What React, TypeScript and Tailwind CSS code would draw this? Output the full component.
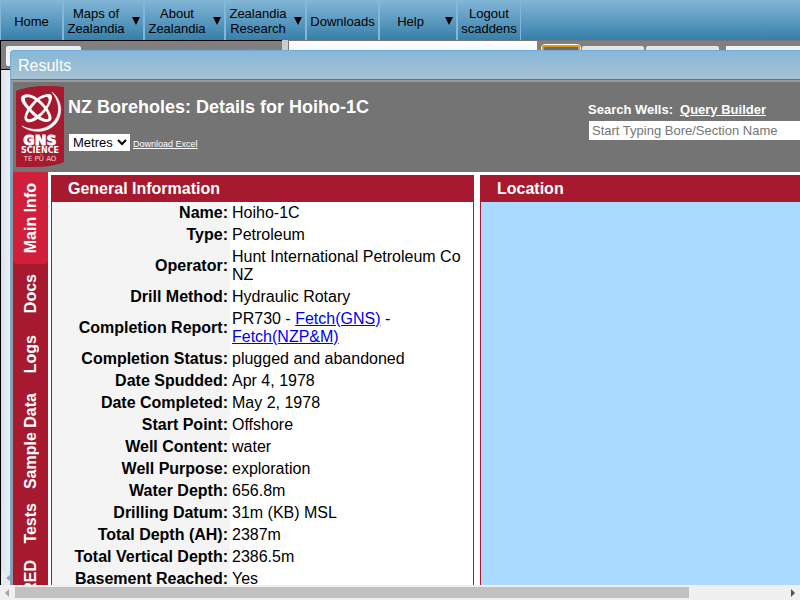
import type { ReactNode } from "react";

const sans = "font-['Liberation_Sans',Arial,sans-serif]";

type NavEntry = { lines: string[]; width: string; menu?: boolean };

const navEntries: NavEntry[] = [
  { lines: ["Home"], width: "w-16 border-r-2 border-l" },
  { lines: ["Maps of", "Zealandia"], width: "w-[81px] border-r-2", menu: true },
  { lines: ["About", "Zealandia"], width: "w-[81px] border-r-2", menu: true },
  { lines: ["Zealandia", "Research"], width: "w-[81px] border-r-2", menu: true },
  { lines: ["Downloads"], width: "w-[73px] border-r-2" },
  { lines: ["Help"], width: "w-[78px] border-r-2", menu: true },
  { lines: ["Logout", "scaddens"], width: "w-[63px] border-r" },
];

const tabs = [
  { label: "Main Info", size: "h-[92px]", active: true },
  { label: "Docs", size: "h-[60px]" },
  { label: "Logs", size: "h-[60px]" },
  { label: "Sample Data", size: "h-[114px]" },
  { label: "Tests", size: "h-[51px]" },
  { label: "FRED", size: "h-[66px]" },
];

const rows: [string, ReactNode][] = [
  ["Name:", "Hoiho-1C"],
  ["Type:", "Petroleum"],
  ["Operator:", "Hunt International Petroleum Co NZ"],
  ["Drill Method:", "Hydraulic Rotary"],
  [
    "Completion Report:",
    <>
      PR730 -{" "}
      <a href="#gns" className="text-[#0000ee] underline">Fetch(GNS)</a> -{" "}
      <a href="#nzpm" className="text-[#0000ee] underline">Fetch(NZP&amp;M)</a>
    </>,
  ],
  ["Completion Status:", "plugged and abandoned"],
  ["Date Spudded:", "Apr 4, 1978"],
  ["Date Completed:", "May 2, 1978"],
  ["Start Point:", "Offshore"],
  ["Well Content:", "water"],
  ["Well Purpose:", "exploration"],
  ["Water Depth:", "656.8m"],
  ["Drilling Datum:", "31m (KB) MSL"],
  ["Total Depth (AH):", "2387m"],
  ["Total Vertical Depth:", "2386.5m"],
  ["Basement Reached:", "Yes"],
];

function NavBar() {
  return (
    <nav className="flex h-10 shrink-0 bg-linear-to-b from-[#82b6d7] to-[#3480aa] text-[13px] leading-[15px] text-black">
      {navEntries.map((entry) => (
        <button
          key={entry.lines.join(" ")}
          type="button"
          className={`flex shrink-0 items-center border-[#84b6d5] pt-[2px] ${entry.width}`}
        >
          <span className="flex-1 text-center">
            {entry.lines.map((line) => (
              <span key={line} className="block">{line}</span>
            ))}
          </span>
          {entry.menu && (
            <svg className="mr-[3px] w-3 shrink-0" viewBox="0 0 12 8" aria-hidden="true">
              <path d="M4 0h8L8 8z" fill="#000" />
            </svg>
          )}
        </button>
      ))}
    </nav>
  );
}

function Backdrop() {
  return (
    <div className="flex h-full border-l border-black">
      <div className="flex w-[281px] shrink-0 flex-col bg-linear-to-r from-[#d8e2ec] to-[#f2f6fa] to-[12px]">
        <div className="h-[30px] border-y border-black bg-[#808080] pt-[5px] pl-[5px]">
          <div className="h-5 w-[75px] rounded-xs bg-linear-to-b from-[#eceff1] to-[#f8f8f8]" />
        </div>
        <div className="flex-1" />
        <div className="flex h-[14px] items-center bg-[#e6eaee] pl-[5px]">
          <svg className="w-[5px]" viewBox="0 0 5 8" aria-hidden="true">
            <path d="M5 0v8L0 4z" fill="#a3a3a3" />
          </svg>
        </div>
      </div>
      <div className="w-[6px] shrink-0 bg-[#cccccc]" />
      <div className="w-[249px] shrink-0 border-t border-l border-[#777777] bg-linear-to-b from-white to-[#eef5fb] to-[12px]" />
      <div className="flex min-w-0 flex-1 items-start gap-[2px] border-t border-[#777777] bg-[#808080] pt-[5px] pl-1">
        <div className="-mt-[2px] h-6 w-10 shrink-0 rounded border border-white bg-[#6b6b6b] p-0">
          <div className="h-full rounded-[3px] border-2 border-[#e09a10]" />
        </div>
        <div className="-ml-[1px] h-6 w-[62px] shrink-0 rounded-xs bg-[#e1e6e9]" />
        <div className="h-6 w-[73px] shrink-0 rounded-xs bg-[#e1e6e9]" />
        <div className="ml-[5px] h-6 flex-1 bg-linear-to-b from-[#e9f1f7] to-white to-[8px]" />
      </div>
    </div>
  );
}

function Logo() {
  return (
    <svg className="mt-1 ml-[3px] h-[81px] w-12 shrink-0" viewBox="0 0 48 81" role="img" aria-label="GNS Science">
      <path d="M0 5Q12 0 30 0q12 0 18 1v75Q38 81 18 81H0z" fill="#a6192e" />
      <g fill="#fff" fillRule="evenodd">
        <path d="M6 10C11 6 19 9 26 16C34 24 38 33 34 35C28 38 20 33 13 25C6 18 3 12 6 10zM9 12C8 14 11 19 17 25C23 31 30 34 32 33C34 31 30 24 24 18C18 12 12 10 9 12z" />
        <path d="M33 8C38 8 36 15 33 20C27 30 18 38 11 36C5 33 11 22 17 16C23 10 28 8 33 8zM31 11C28 11 23 13 19 18C13 25 9 32 12 33C16 34 23 29 28 23C33 17 34 12 31 11z" />
        <path d="M36 6C46 14 47 27 41 36C34 46 18 49 6 40C18 46 32 44 39 34C45 26 43 15 36 6z" stroke="#fff" strokeWidth=".6" />
      </g>
      <g fill="#fff" textAnchor="middle">
        <text x="24" y="59" className="font-['DejaVu_Sans',sans-serif] text-[14px] font-bold" stroke="#fff" strokeWidth=".8">GNS</text>
        <text x="24" y="67" className="font-['DejaVu_Sans',sans-serif] text-[8px] font-bold">SCIENCE</text>
        <text x="24" y="75" className="font-['DejaVu_Sans',sans-serif] text-[7px]" opacity=".8">TE PŪ AO</text>
      </g>
    </svg>
  );
}

function Header() {
  return (
    <header className="flex h-[90px] shrink-0 bg-[#747474] text-white">
      <Logo />
      <div className="ml-1 w-[520px] shrink-0 pt-[15px]">
        <h1 className="text-[18px] leading-5 font-bold">NZ Boreholes: Details for Hoiho-1C</h1>
        <div className="mt-[17px] flex items-center pl-[1px]">
          <div className="grid h-[17px] w-[61px] items-center bg-white text-black">
            <select
              aria-label="Units"
              defaultValue="Metres"
              className="col-start-1 row-start-1 h-[17px] appearance-none bg-transparent pl-1 text-[13px] leading-[17px]"
            >
              <option>Metres</option>
              <option>Feet</option>
            </select>
            <svg className="pointer-events-none col-start-1 row-start-1 mr-[3px] w-[10px] justify-self-end" viewBox="0 0 10 7" aria-hidden="true">
              <path d="M1 1l4 4l4-4" fill="none" stroke="#000" strokeWidth="2" />
            </svg>
          </div>
          <a href="#excel" className="ml-[3px] pt-[2px] text-[9px] leading-3 underline">Download Excel</a>
        </div>
      </div>
      <div className="min-w-0 flex-1 pt-5 text-[13px]">
        <div className="leading-[15px] font-bold">
          <label htmlFor="well-search">Search Wells:</label>
          <a href="#query" className="ml-[7px] underline">Query Builder</a>
        </div>
        <input
          id="well-search"
          type="text"
          placeholder="Start Typing Bore/Section Name"
          className="mt-1 ml-[1px] block h-[19px] w-full bg-white px-[3px] text-[13px] text-black placeholder:text-[#757575]"
        />
      </div>
    </header>
  );
}

function Panel({ title, className, children }: { title: string; className: string; children?: ReactNode }) {
  return (
    <section className={`flex flex-col border-[#a6192e] ${className}`}>
      <h2 className="h-[27px] shrink-0 bg-[#a6192e] pl-4 text-base leading-[27px] font-bold text-white">{title}</h2>
      {children}
    </section>
  );
}

function ResultsWindow() {
  return (
    <div className="absolute inset-x-0 top-[10px] bottom-0 ml-[10px] flex flex-col overflow-hidden rounded-tl border-t border-l border-[#77a9d8] bg-[#999999]">
      <div className="h-[29px] shrink-0 border-b border-[#3d7eb0] bg-linear-to-b from-[#85b8d8] to-[#a7c1d2] pl-[7px] text-base leading-[29px] text-white">
        Results
      </div>
      <div className="flex min-h-0 flex-1 flex-col pt-[2px] pl-[2px]">
        <Header />
        <div className="flex min-h-0 flex-1 bg-white">
          <div role="tablist" aria-orientation="vertical" className="flex w-[35px] shrink-0 flex-col overflow-hidden bg-[#a6192e]">
            {tabs.map((tab) => (
              <button
                key={tab.label}
                type="button"
                role="tab"
                aria-selected={!!tab.active}
                className={`flex shrink-0 items-center justify-center text-base leading-[18px] font-bold text-white ${tab.size} ${tab.active ? "rounded-b bg-[#cf1f3b]" : ""}`}
              >
                <span className="rotate-180 whitespace-nowrap [writing-mode:vertical-rl]">{tab.label}</span>
              </button>
            ))}
          </div>
          <div className="flex min-w-0 flex-1 gap-[6px] overflow-hidden pt-[3px] pl-[3px]">
            <Panel title="General Information" className="w-[423px] shrink-0 border-x">
              <table className="w-full border-collapse text-base leading-[18px] text-black">
                <tbody>
                  {rows.map(([label, value]) => (
                    <tr key={label}>
                      <th scope="row" className="w-[178px] bg-[#f4f4f4] p-[2px] text-right font-bold whitespace-nowrap">{label}</th>
                      <td className="p-[2px]">{value}</td>
                    </tr>
                  ))}
                </tbody>
              </table>
            </Panel>
            <Panel title="Location" className="min-w-0 flex-1 border-l">
              <div className="flex-1 bg-[#aadaff]" />
            </Panel>
          </div>
        </div>
      </div>
    </div>
  );
}

function HorizontalScrollbar() {
  return (
    <div className="flex h-[15px] shrink-0 items-center bg-[#f0f0f0]" aria-hidden="true">
      <svg className="mx-[5px] w-[5px]" viewBox="0 0 5 8">
        <path d="M4 0v8L0 4z" fill="#a3a3a3" />
      </svg>
      <div className="flex-1">
        <div className="h-[11px] w-7/8 bg-[#c1c1c1]" />
      </div>
      <svg className="mx-[5px] w-[5px]" viewBox="0 0 5 8">
        <path d="M1 0v8l4-4z" fill="#505050" />
      </svg>
    </div>
  );
}

export default function App() {
  return (
    <div className={`flex h-screen flex-col overflow-hidden bg-white ${sans}`}>
      <NavBar />
      <main className="relative min-h-0 flex-1">
        <Backdrop />
        <ResultsWindow />
      </main>
      <HorizontalScrollbar />
    </div>
  );
}
